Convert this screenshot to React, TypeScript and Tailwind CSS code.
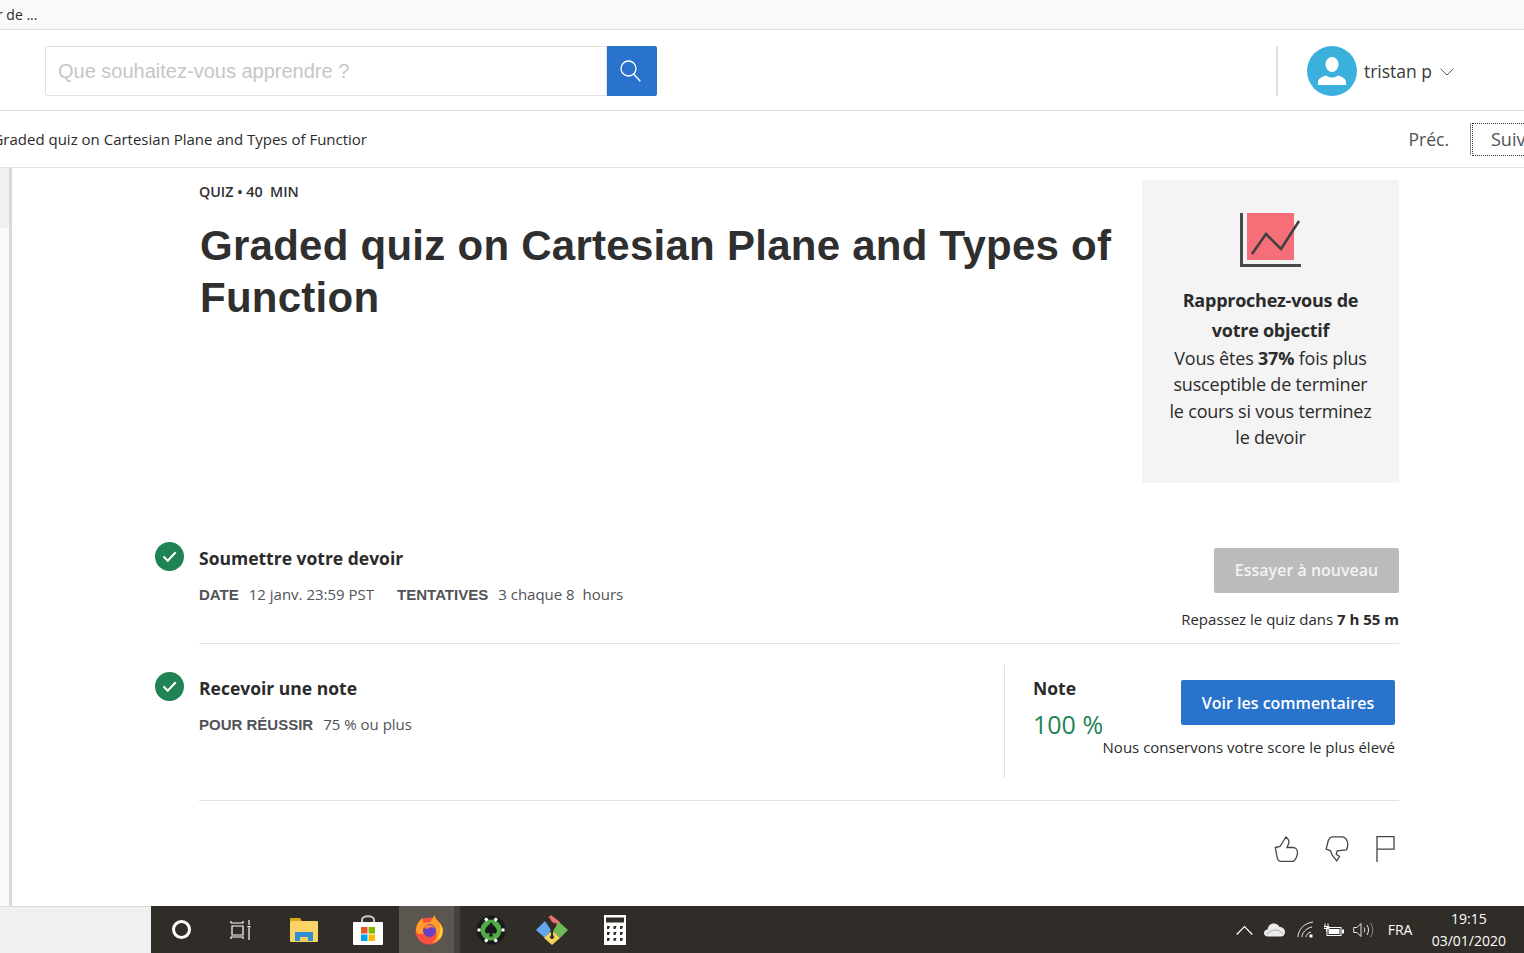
function CheckBadge() {
  return (
    <svg className="h-[29px] w-[29px] shrink-0" viewBox="0 0 29 29">
      <circle cx="14.5" cy="14.5" r="14.5" fill="#1f8354" />
      <path d="M8.500 14.500l4.200 4.200 8-8.400" fill="none" stroke="#fff" strokeWidth="2" />
    </svg>
  );
}

function SearchGlyph() {
  return (
    <svg className="mr-[4px] h-[22px] w-[21px]" viewBox="0 0 21 22">
      <circle cx="8.500" cy="8.500" r="7.500" fill="none" stroke="#fff" strokeWidth="1.300" />
      <path d="M13.800 14.200l6.500 7" fill="none" stroke="#fff" strokeWidth="1.400" />
    </svg>
  );
}

function UserAvatar() {
  return (
    <svg className="h-[50px] w-[50px]" viewBox="0 0 50 50">
      <circle cx="25" cy="25" r="25" fill="#3cb0dc" />
      <ellipse cx="25" cy="18.500" rx="6.500" ry="7.500" fill="#fff" />
      <path d="M11 39v-3c0-3 3-5 8-6.500 2 1.500 4 2 6 2s4-.5 6-2c5 1.500 8 3.500 8 6.500v3z" fill="#fff" />
    </svg>
  );
}

function Caret() {
  return (
    <svg className="ml-[8px] mt-[1px] h-[8px] w-[14px]" viewBox="0 0 14 8">
      <path d="M.5.700L7 7l6.500-6.300" fill="none" stroke="#555" strokeWidth="1" />
    </svg>
  );
}

function GoalChart() {
  return (
    <svg className="ml-[1px] h-[56px] w-[62px]" viewBox="0 0 62 56">
      <rect x="7" y="0" width="47" height="47" fill="#f56e78" />
      <path d="M1.500 0v52.500H61" fill="none" stroke="#4a4a4a" strokeWidth="3" />
      <path d="M12 41l14-20 15 15 18-28" fill="none" stroke="#3f3f3f" strokeWidth="2.500" />
    </svg>
  );
}

function ThumbUp() {
  return (
    <svg className="mr-[-1px] h-[26px] w-[25px]" viewBox="0 0 25 26">
      <path d="M1.300 11.500L6 10.500 12 1c2 1.500 3 3.500 3 5.500l-2 5h6c2.500 0 4.500 2 4.500 5 0 3-2 8-4.500 9H7c-2 0-3.500-1.500-4-5z" fill="none" stroke="#3f464d" strokeWidth="1.300" />
    </svg>
  );
}

function ThumbDown() {
  return (
    <svg className="h-[26px] w-[24px]" viewBox="0 0 24 26">
      <path d="M1.200 13.200L3.200 4.800C4 2.500 5.500 1 7.200 .8h10c3 0 5.600 3.500 5.600 7.400 0 2.500-.5 4.500-1.500 5.600l-9.100 1-1 3.400 3.300 2.300-2.700 4.300-4.600-5.600-1.700-4.400z" fill="none" stroke="#3f464d" strokeWidth="1.300" />
    </svg>
  );
}

function FlagIcon() {
  return (
    <svg className="h-[26px] w-[19px]" viewBox="0 0 19 26">
      <path d="M1 26V.7h17v12.500H1" fill="none" stroke="#3f464d" strokeWidth="1.300" />
    </svg>
  );
}

function CortanaIcon() {
  return <div className="h-[19px] w-[19px] rounded-full border-[3px] border-white" />;
}

function TaskViewIcon() {
  return (
    <svg className="h-[22px] w-[22px]" viewBox="0 0 22 22">
      <path d="M1 2v2h12V2M1 20v-2h12v2M2 7h11v9H2zM19 1v5M19 9v12" fill="none" stroke="#fff" strokeWidth="1.200" />
      <rect x="17.500" y="7" width="3" height="1.500" fill="#fff" />
    </svg>
  );
}

function ExplorerIcon() {
  return (
    <svg className="h-[26px] w-[28px]" viewBox="0 0 28 26">
      <path d="M0 1h10l2 3h-12z" fill="#dba614" />
      <rect x="0" y="4" width="28" height="21" rx="1" fill="#fbd467" />
      <path d="M5 24v-9h18v9h-5v-4h-8v4z" fill="#2f8fd3" />
      <rect x="10" y="20" width="8" height="5" fill="#f6cb5c" />
    </svg>
  );
}

function StoreIcon() {
  return (
    <svg className="h-[30px] w-[30px]" viewBox="0 0 30 30">
      <path d="M9 8V5c0-5 12-5 12 0v3" fill="none" stroke="#c9c9c9" strokeWidth="2" />
      <rect x="0" y="7" width="30" height="23" rx="1" fill="#fff" />
      <rect x="8" y="12" width="6.500" height="6.500" fill="#e8562a" />
      <rect x="15.500" y="12" width="6.500" height="6.500" fill="#7fba00" />
      <rect x="8" y="19.500" width="6.500" height="6.500" fill="#00a4ef" />
      <rect x="15.500" y="19.500" width="6.500" height="6.500" fill="#ffb900" />
    </svg>
  );
}

function FirefoxIcon() {
  return (
    <svg className="ml-[5px] h-[30px] w-[30px]" viewBox="0 0 30 30">
      <circle cx="15" cy="16" r="13.500" fill="#f9503f" />
      <path d="M2 16C2 8 7 4 9 3c-1 2 0 4 1 5 2-1 5-1 6 0 1-3 3-6 5-8 0 3 1 4 4 7 3 3 4 6 4 9a12 12 0 0 1-12 12c8-3 8-15-2-17-5 0-7 4-5 8H4z" fill="#ff9f28" />
      <path d="M26 9c3 4 3 9 1 13l-4 3c3-5 4-11 3-16z" fill="#ffd43a" />
      <circle cx="15.500" cy="15.500" r="6.500" fill="#6a3fc7" />
      <path d="M10 11c3-2 9-2 11 2-3-1-6-1-7 1-3 0-4-1-4-3z" fill="#f9803f" />
    </svg>
  );
}

function PokerIcon() {
  return (
    <svg className="h-[30px] w-[30px]" viewBox="0 0 30 30">
      <circle cx="15" cy="15" r="14.500" fill="#17191a" />
      <circle cx="15" cy="15" r="10.500" fill="#52a945" />
      <path d="M15 7c2 3.500 6 5.500 6 9 0 2.500-3.500 3.500-5 1.500l1 4h-4l1-4c-1.500 2-5 1-5-1.500 0-3.500 4-5.500 6-9z" fill="#17191a" />
      <path d="M9 3.500l2.500 2M21 3.500l-2.500 2M1.500 15h3M25.500 15h3M9 26.500l2.500-2M21 26.500l-2.500-2" stroke="#fff" strokeWidth="3" />
    </svg>
  );
}

function ForkIcon() {
  return (
    <svg className="h-[30px] w-[32px]" viewBox="0 0 32 30">
      <path d="M12 3l3-3 9 7-3 4z" fill="#ee6f72" />
      <path d="M0 15l9-9 6 9-6 8z" fill="#62a6ee" />
      <path d="M23 7l9 8-8 8-7-7z" fill="#6fba56" />
      <path d="M8 23l6-6h4l6 6-8 7z" fill="#f3d260" />
      <path d="M13 3l3 12v8M20 8l-4 7" fill="none" stroke="#302c27" strokeWidth="2" />
      <circle cx="16" cy="22" r="2" fill="#302c27" />
    </svg>
  );
}

function CalculatorIcon() {
  return (
    <svg className="h-[30px] w-[22px]" viewBox="0 0 22 30">
      <rect width="22" height="30" fill="#fff" />
      <rect x="2" y="2.500" width="18" height="5" fill="#302c27" />
      <path d="M3 11h3l-1 3H3zM9.500 11h3l-1 3h-2zM16 11h3l-1 3h-2zM3 17h3l-1 3H3zM9.500 17h3l-1 3h-2zM16 17h3l-1 3h-2zM3 23h3l-1 3H3zM9.500 23h3l-1 3h-2zM16 23h3l-1 3h-2z" fill="#302c27" />
    </svg>
  );
}

function TrayIcons() {
  return (
    <div className="flex items-center">
      <svg className="mr-[11px] h-[10px] w-[17px]" viewBox="0 0 17 10">
        <path d="M.7 9.500L8.500 1.500l7.800 8" fill="none" stroke="#fff" strokeWidth="1.200" />
      </svg>
      <svg className="mr-[12px] h-[14px] w-[21px]" viewBox="0 0 21 14">
        <path d="M4 13.500C1.500 13.500 0 12 0 10c0-2 1.500-3.500 3.500-3.500C4 3 6.500.5 10 .5c2.500 0 4.500 1.500 5.500 3.500 3 0 5.500 2 5.500 5 0 2.500-1.500 4.500-4 4.500z" fill="#ebebeb" />
        <path d="M3 11c3-3 6-4 9-4 3 0 5 2 7 4" fill="none" stroke="#aaa" strokeWidth="1" />
      </svg>
      <svg className="mr-[10px] h-[17px] w-[17px]" viewBox="0 0 17 17">
        <path d="M1 16C1 9 7 2 16 1M5 16c0-4 4-9 10-10M9 16c0-2 2-4.500 5-5" fill="none" stroke="#e8e8e8" strokeWidth="1" />
        <rect x="12.500" y="13.500" width="3" height="3" fill="#fff" />
      </svg>
      <svg className="mr-[9px] h-[14px] w-[20px]" viewBox="0 0 20 14">
        <path d="M1 .5v3M4 .5v3M0 3.500h5v2H0zM2.500 5.500v3" stroke="#fff" strokeWidth="1" fill="none" />
        <rect x="3" y="4.500" width="14" height="8" fill="none" stroke="#fff" strokeWidth="1" />
        <rect x="4.500" y="6" width="11" height="5" fill="#fff" />
        <rect x="18" y="6.500" width="2" height="4" fill="#fff" />
      </svg>
      <svg className="mr-[14px] h-[16px] w-[21px]" viewBox="0 0 21 16">
        <path d="M.7 5.500h3.300L8 1.500v13l-4-4H.7zM11 5.500c1 1.500 1 3.500 0 5M14 3c2 3 2 7 0 10" fill="none" stroke="#e8e8e8" strokeWidth="1" />
        <path d="M17.500 1c3 4 3 10 0 14" fill="none" stroke="#8a8a8a" strokeWidth="1" />
      </svg>
      <span className="w-[26px] text-[14px] text-white">FRA</span>
    </div>
  );
}

function Taskbar() {
  return (
    <div className="flex h-[47px] shrink-0">
      <div className="w-[151px] border-t border-[#dadada] bg-[#f0f0f0]" />
      <div className="flex flex-1 items-center justify-between bg-[#302c27] pr-[18px]">
        <div className="flex h-full items-center">
          <div className="flex w-[60px] justify-center"><CortanaIcon /></div>
          <div className="flex w-[60px] justify-center"><TaskViewIcon /></div>
          <div className="flex w-[66px] justify-center"><ExplorerIcon /></div>
          <div className="flex w-[62px] justify-center"><StoreIcon /></div>
          <div className="flex h-full w-[55px] items-center justify-center bg-[#5b5750]"><FirefoxIcon /></div>
          <div className="h-full w-[6px] bg-[#45413c]" />
          <div className="flex w-[62px] justify-center"><PokerIcon /></div>
          <div className="flex w-[60px] justify-center"><ForkIcon /></div>
          <div className="flex w-[66px] justify-center"><CalculatorIcon /></div>
        </div>
        <div className="flex items-center gap-[18px]">
          <TrayIcons />
          <div className="text-center text-[14px] leading-[22px] text-white">
            <div>19:15</div>
            <div>03/01/2020</div>
          </div>
        </div>
      </div>
    </div>
  );
}

export default function App() {
  return (
    <div className="flex h-[953px] flex-col overflow-hidden bg-white font-['Open_Sans',sans-serif] text-[#2b2b2b]">
      <div className="flex h-[30px] shrink-0 items-center overflow-hidden border-b border-[#e0e0e0] bg-[#f9f9f9] text-[14px]">
        <span className="ml-[-3px]">r de ...</span>
      </div>

      <header className="flex h-[81px] shrink-0 items-center justify-between border-b border-[#e1e1e1] pl-[45px] pr-[70px] pt-[2px]">
        <div className="flex">
          <div className="flex h-[50px] w-[562px] items-center rounded-l-[2px] border border-[#e1e1e1] pl-[12px] font-['Liberation_Sans',sans-serif] text-[20px] text-[#c6c6c6]">
            Que souhaitez-vous apprendre ?
          </div>
          <button className="flex h-[50px] w-[50px] items-center justify-center rounded-r-[2px] bg-[#2a73cc]" type="button">
            <SearchGlyph />
          </button>
        </div>
        <div className="flex items-center">
          <div className="mr-[29px] h-[50px] w-[2px] bg-[#e1e1e1]" />
          <UserAvatar />
          <span className="ml-[7px] text-[17.500px] text-[#373a3c]">tristan p</span>
          <Caret />
        </div>
      </header>

      <nav className="flex h-[57px] shrink-0 items-center justify-between overflow-hidden border-b border-[#e1e1e1]">
        <div className="flex h-full w-[367px] items-center justify-end overflow-hidden whitespace-nowrap text-[15px]">
          Graded quiz on Cartesian Plane and Types of Functior
        </div>
        <div className="flex h-full items-center text-[17.500px] text-[#4f5257]">
          <span>Préc.</span>
          <span className="ml-[21px] h-[32px] w-[1px] bg-[#8d8d8d]" />
          <div className="ml-[1px] flex h-[33px] w-[52px] items-center overflow-hidden border border-r-0 border-dotted border-[#333] pl-[18px] text-[18px]">
            Suiv
          </div>
        </div>
      </nav>

      <main className="flex min-h-0 flex-1">
        <div className="flex w-[155px] shrink-0">
          <div className="flex w-[9px] flex-col bg-[#fafafa]">
            <div className="h-[60px] bg-[#f1f1f1]" />
          </div>
          <div className="w-[3px] bg-[#d9d9d9]" />
        </div>
        <div className="w-[1244px] shrink-0">
          <section className="mt-[12px] flex h-[303px] justify-between pl-[44px]">
            <div className="w-[930px] pt-[2px]">
              <p className="text-[14.300px] font-semibold leading-[20px] text-[#2f2f2f]">QUIZ • 40&nbsp; MIN</p>
              <h1 className="mt-[18px] pl-[1px] font-['Liberation_Sans',sans-serif] text-[42px] font-bold leading-[52px] tracking-[0.26px] text-[#2f2f2f]">
                Graded quiz on Cartesian Plane and Types of Function
              </h1>
            </div>
            <aside className="flex w-[257px] shrink-0 flex-col items-center bg-[#f4f4f4] px-[26px] pt-[33px] text-center">
              <GoalChart />
              <p className="mt-[16px] text-[18px] font-bold leading-[30px] tracking-[-0.25px]">Rapprochez-vous de votre objectif</p>
              <p className="text-[18px] leading-[26.300px] tracking-[-0.2px]">
                Vous êtes <b>37%</b> fois plus susceptible de terminer le cours si vous terminez le devoir
              </p>
            </aside>
          </section>

          <section className="mt-[59px] flex gap-[15px]">
            <CheckBadge />
            <div className="flex h-[102px] flex-1 justify-between border-b border-[#e1e1e1]">
              <div className="pt-[3px]">
                <h2 className="text-[17.500px] font-bold leading-[26px]">Soumettre votre devoir</h2>
                <div className="mt-[11px] flex items-baseline text-[15px] leading-[24px] text-[#505357]">
                  <span className="mr-[10px] font-['Liberation_Sans',sans-serif] font-bold">DATE</span>
                  <span className="mr-[23px]">12 janv. 23:59 PST</span>
                  <span className="mr-[10px] font-['Liberation_Sans',sans-serif] font-bold">TENTATIVES</span>
                  <span>3 chaque 8&nbsp; hours</span>
                </div>
              </div>
              <div className="flex flex-col items-end pt-[6px]">
                <button className="h-[45px] w-[185px] rounded-[2px] bg-[#bbbbbb] pb-[2px] text-[16px] font-semibold text-[#f3f3f3]" type="button">
                  Essayer à nouveau
                </button>
                <p className="mt-[16px] text-[15px] leading-[20px]">
                  Repassez le quiz dans <b>7 h 55 m</b>
                </p>
              </div>
            </div>
          </section>

          <section className="mt-[28px] flex gap-[15px]">
            <CheckBadge />
            <div className="flex h-[129px] flex-1 items-start justify-between border-b border-[#e1e1e1]">
              <div className="pt-[3px]">
                <h2 className="text-[17.500px] font-bold leading-[26px]">Recevoir une note</h2>
                <div className="mt-[11px] flex items-baseline text-[15px] leading-[24px] text-[#505357]">
                  <span className="mr-[10px] font-['Liberation_Sans',sans-serif] font-bold">POUR RÉUSSIR</span>
                  <span>75 % ou plus</span>
                </div>
              </div>
              <div className="mr-[4px] mt-[-7px] flex h-[113px] w-[391px] border-l border-[#e1e1e1] pl-[28px] pt-[10px]">
                <div className="w-full">
                  <div className="flex items-start justify-between">
                    <div>
                      <p className="text-[17.500px] font-bold leading-[26px]">Note</p>
                      <p className="mt-[8px] text-[25px] leading-[30px] text-[#1f8354]">100 %</p>
                    </div>
                    <button className="mt-[5px] h-[45px] w-[214px] rounded-[2px] bg-[#2a73cc] text-[16px] font-semibold text-white" type="button">
                      Voir les commentaires
                    </button>
                  </div>
                  <p className="mt-[-2px] text-right text-[15px] leading-[20px]">Nous conservons votre score le plus élevé</p>
                </div>
              </div>
            </div>
          </section>

          <div className="mt-[35px] flex justify-end gap-[27px] pr-[4px]">
            <ThumbUp />
            <ThumbDown />
            <FlagIcon />
          </div>
        </div>
      </main>

      <Taskbar />
    </div>
  );
}
